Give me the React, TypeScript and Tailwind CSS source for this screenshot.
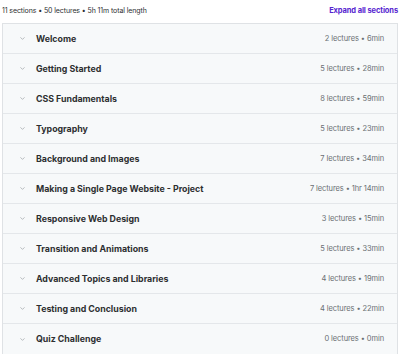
import { ChevronDown } from 'lucide-react'

const sections = [
  { title: 'Welcome', meta: '2 lectures • 6min' },
  { title: 'Getting Started', meta: '5 lectures • 28min' },
  { title: 'CSS Fundamentals', meta: '8 lectures • 59min' },
  { title: 'Typography', meta: '5 lectures • 23min' },
  { title: 'Background and Images', meta: '7 lectures • 34min' },
  { title: 'Making a Single Page Website - Project', meta: '7 lectures • 1hr 14min' },
  { title: 'Responsive Web Design', meta: '3 lectures • 15min' },
  { title: 'Transition and Animations', meta: '5 lectures • 33min' },
  { title: 'Advanced Topics and Libraries', meta: '4 lectures • 19min' },
  { title: 'Testing and Conclusion', meta: '4 lectures • 22min' },
  { title: 'Quiz Challenge', meta: '0 lectures • 0min' },
]

export default function App() {
  return (
    <div className="w-[400px] h-[354px] bg-white px-[2px] font-['Inter',sans-serif] overflow-hidden">
      <div className="flex items-center justify-between h-[23px] pb-[1px]">
        <span className="text-[7px] text-[#2d2f31] tracking-[-0.1px]">11 sections • 50 lectures • 5h 11m total length</span>
        <span className="text-[7.5px] font-bold text-[#5624d0] tracking-[-0.1px]">Expand all sections</span>
      </div>
      <div className="border border-[#dfe2e5]">
        {sections.map((s, i) => (
          <div
            key={s.title}
            className={`flex items-center h-[30px] bg-[#f7f9fa] pl-[16px] pr-[13px] ${i < sections.length - 1 ? 'border-b border-[#e4e7ea]' : ''}`}
          >
            <ChevronDown className="w-[7px] h-[7px] text-[#8a8f93]" strokeWidth={2} />
            <span className="ml-[10px] text-[8.8px] font-bold text-[#2d2f31] flex-1">{s.title}</span>
            <span className="text-[7.5px] text-[#6a6f73] tracking-[-0.1px]">{s.meta}</span>
          </div>
        ))}
      </div>
    </div>
  )
}
